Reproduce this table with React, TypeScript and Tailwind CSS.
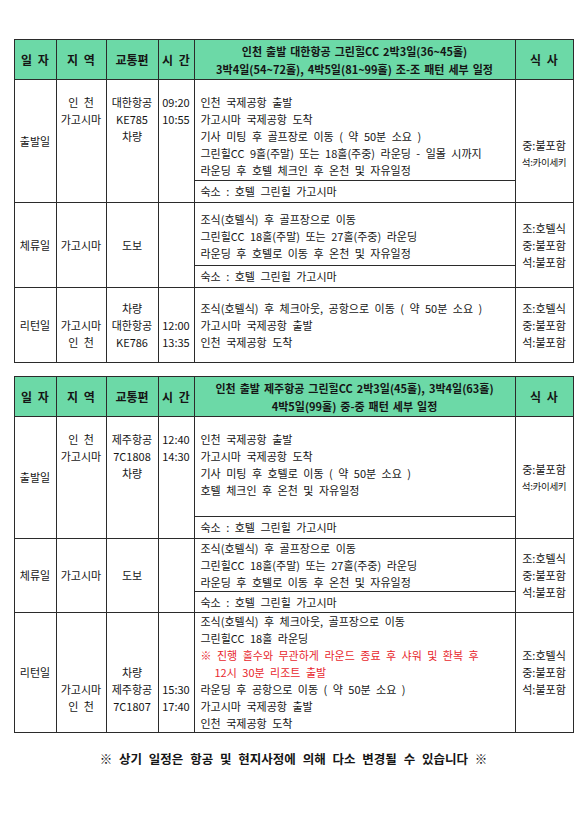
import React from "react";

type Line = string | { text: string; red?: boolean; indent?: boolean; small?: boolean };

type Row = {
  day: string;
  region: Line[];
  transport: Line[];
  time: Line[];
  schedule: Line[];
  stay?: string;
  meals: Line[];
  sideCls: string; // 지역/교통편/시간 정렬
  schedCls: string;
  mealsCls: string;
  scheduleH: number;
  stayH?: number;
};

type Plan = { title: string[]; rows: Row[] };

const STAY = "숙소 : 호텔 그린힐 가고시마";

const PLANS: Plan[] = [
  {
    title: [
      "인천 출발 대한항공 그린힐CC 2박3일(36~45홀)",
      "3박4일(54~72홀), 4박5일(81~99홀) 조-조 패턴 세부 일정",
    ],
    rows: [
      {
        day: "출발일",
        region: ["인 천", "가고시마"],
        transport: ["대한항공", "KE785", "차량"],
        time: ["09:20", "10:55"],
        schedule: [
          "인천 국제공항 출발",
          "가고시마 국제공항 도착",
          "기사 미팅 후 골프장로 이동 ( 약 50분 소요 )",
          "그린힐CC 9홀(주말) 또는 18홀(주중) 라운딩 - 일몰 시까지",
          "라운딩 후 호텔 체크인 후 온천 및 자유일정",
        ],
        stay: STAY,
        meals: ["중:불포함", { text: "석:카이세키", small: true }],
        sideCls: "align-top pt-[14px]",
        schedCls: "align-top pt-[14px]",
        mealsCls: "align-top pt-[57px]",
        scheduleH: 101,
        stayH: 22,
      },
      {
        day: "체류일",
        region: ["가고시마"],
        transport: ["도보"],
        time: [],
        schedule: [
          "조식(호텔식) 후 골프장으로 이동",
          "그린힐CC 18홀(주말) 또는 27홀(주중) 라운딩",
          "라운딩 후 호텔로 이동 후 온천 및 자유일정",
        ],
        stay: STAY,
        meals: ["조:호텔식", "중:불포함", "석:불포함"],
        sideCls: "align-middle",
        schedCls: "align-top pt-[8px]",
        mealsCls: "align-middle",
        scheduleH: 63,
        stayH: 22,
      },
      {
        day: "리턴일",
        region: ["", "가고시마", "인 천"],
        transport: ["차량", "대한항공", "KE786"],
        time: ["", "12:00", "13:35"],
        schedule: [
          "조식(호텔식) 후 체크아웃, 공항으로 이동 ( 약 50분 소요 )",
          "가고시마 국제공항 출발",
          "인천 국제공항 도착",
        ],
        meals: ["조:호텔식", "중:불포함", "석:불포함"],
        sideCls: "align-middle",
        schedCls: "align-middle",
        mealsCls: "align-middle",
        scheduleH: 75,
      },
    ],
  },
  {
    title: [
      "인천 출발 제주항공 그린힐CC 2박3일(45홀), 3박4일(63홀)",
      "4박5일(99홀) 중-중 패턴 세부 일정",
    ],
    rows: [
      {
        day: "출발일",
        region: ["인 천", "가고시마"],
        transport: ["제주항공", "7C1808", "차량"],
        time: ["12:40", "14:30"],
        schedule: [
          "인천 국제공항 출발",
          "가고시마 국제공항 도착",
          "기사 미팅 후 호텔로 이동 ( 약 50분 소요 )",
          "호텔 체크인 후 온천 및 자유일정",
        ],
        stay: STAY,
        meals: ["중:불포함", { text: "석:카이세키", small: true }],
        sideCls: "align-top pt-[14px]",
        schedCls: "align-top pt-[14px]",
        mealsCls: "align-middle",
        scheduleH: 100,
        stayH: 22,
      },
      {
        day: "체류일",
        region: ["가고시마"],
        transport: ["도보"],
        time: [],
        schedule: [
          "조식(호텔식) 후 골프장으로 이동",
          "그린힐CC 18홀(주말) 또는 27홀(주중) 라운딩",
          "라운딩 후 호텔로 이동 후 온천 및 자유일정",
        ],
        stay: STAY,
        meals: ["조:호텔식", "중:불포함", "석:불포함"],
        sideCls: "align-middle",
        schedCls: "align-top pt-[1px]",
        mealsCls: "align-middle",
        scheduleH: 52,
        stayH: 21,
      },
      {
        day: "리턴일",
        region: ["", "", "", "", "가고시마", "인 천", ""],
        transport: ["", "", "", "차량", "제주항공", "7C1807", ""],
        time: ["", "", "", "", "15:30", "17:40", ""],
        schedule: [
          "조식(호텔식) 후 체크아웃, 골프장으로 이동",
          "그린힐CC 18홀 라운딩",
          { text: "※ 진행 홀수와 무관하게 라운드 종료 후 샤워 및 환복 후", red: true },
          { text: "12시 30분 리조트 출발", red: true, indent: true },
          "라운딩 후 공항으로 이동 ( 약 50분 소요 )",
          "가고시마 국제공항 출발",
          "인천 국제공항 도착",
        ],
        meals: ["조:호텔식", "중:불포함", "석:불포함"],
        sideCls: "align-middle",
        schedCls: "align-middle",
        mealsCls: "align-middle",
        scheduleH: 120,
      },
    ],
  },
];

function Lines({ lines }: { lines: Line[] }) {
  return (
    <div>
      {lines.map((l, i) => {
        const item = typeof l === "string" ? { text: l } : l;
        return (
          <div
            key={i}
            className={
              "h-[17px] leading-[17px] whitespace-pre " +
              (item.red ? "text-[#e8282e] " : "") +
              (item.indent ? "pl-[14px] " : "") +
              (item.small ? "text-[9.5px] tracking-[-0.3px] [word-spacing:0px] " : "")
            }
          >
            {item.text || "\u00a0"}
          </div>
        );
      })}
    </div>
  );
}

const cell = "border border-[#2b2b2b] p-0";

function PlanTable({ plan }: { plan: Plan }) {
  return (
    <table className="table-fixed border-collapse w-[559px] text-[11px] text-[#151515] [word-spacing:3px]">
      <colgroup>
        <col className="w-[42px]" />
        <col className="w-[50px]" />
        <col className="w-[52px]" />
        <col className="w-[36px]" />
        <col className="w-[321px]" />
        <col className="w-[58px]" />
      </colgroup>
      <thead>
        <tr className="h-[40px] bg-[#6cd9a7] font-bold text-[12px] [word-spacing:3px]">
          <th className={cell}>일 자</th>
          <th className={cell}>지 역</th>
          <th className={cell}>교통편</th>
          <th className={cell}>시 간</th>
          <th className={cell + " text-[11px] leading-[18px] font-bold [word-spacing:1.5px]"}>
            {plan.title.map((t) => (
              <div key={t}>{t}</div>
            ))}
          </th>
          <th className={cell}>식 사</th>
        </tr>
      </thead>
      <tbody>
        {plan.rows.map((r) => {
          const span = r.stay ? 2 : 1;
          return (
            <React.Fragment key={r.day}>
              <tr style={{ height: r.scheduleH }}>
                <td rowSpan={span} className={cell + " text-center align-middle"}>
                  {r.day}
                </td>
                <td rowSpan={span} className={cell + " text-center " + r.sideCls}>
                  <Lines lines={r.region} />
                </td>
                <td rowSpan={span} className={cell + " text-center [word-spacing:0px] " + r.sideCls}>
                  <Lines lines={r.transport} />
                </td>
                <td rowSpan={span} className={cell + " text-center " + r.sideCls}>
                  <Lines lines={r.time} />
                </td>
                <td className={cell + " pl-[6px] " + r.schedCls}>
                  <Lines lines={r.schedule} />
                </td>
                <td rowSpan={span} className={cell + " text-center " + r.mealsCls}>
                  <Lines lines={r.meals} />
                </td>
              </tr>
              {r.stay && (
                <tr style={{ height: r.stayH }}>
                  <td className={cell + " pl-[6px] align-middle"}>{r.stay}</td>
                </tr>
              )}
            </React.Fragment>
          );
        })}
      </tbody>
    </table>
  );
}

export default function App() {
  return (
    <div
      className="w-[587px] h-[830px] bg-white flex flex-col items-center pt-[39px]"
      style={{ fontFamily: '"Noto Sans CJK KR", "Noto Sans", sans-serif' }}
    >
      <PlanTable plan={PLANS[0]} />
      <div className="h-[13px]" />
      <PlanTable plan={PLANS[1]} />
      <p className="mt-[17px] text-[12.5px] font-bold text-[#151515] [word-spacing:4px] whitespace-pre">
        ※ 상기 일정은 항공 및 현지사정에 의해 다소 변경될 수 있습니다 ※
      </p>
    </div>
  );
}
